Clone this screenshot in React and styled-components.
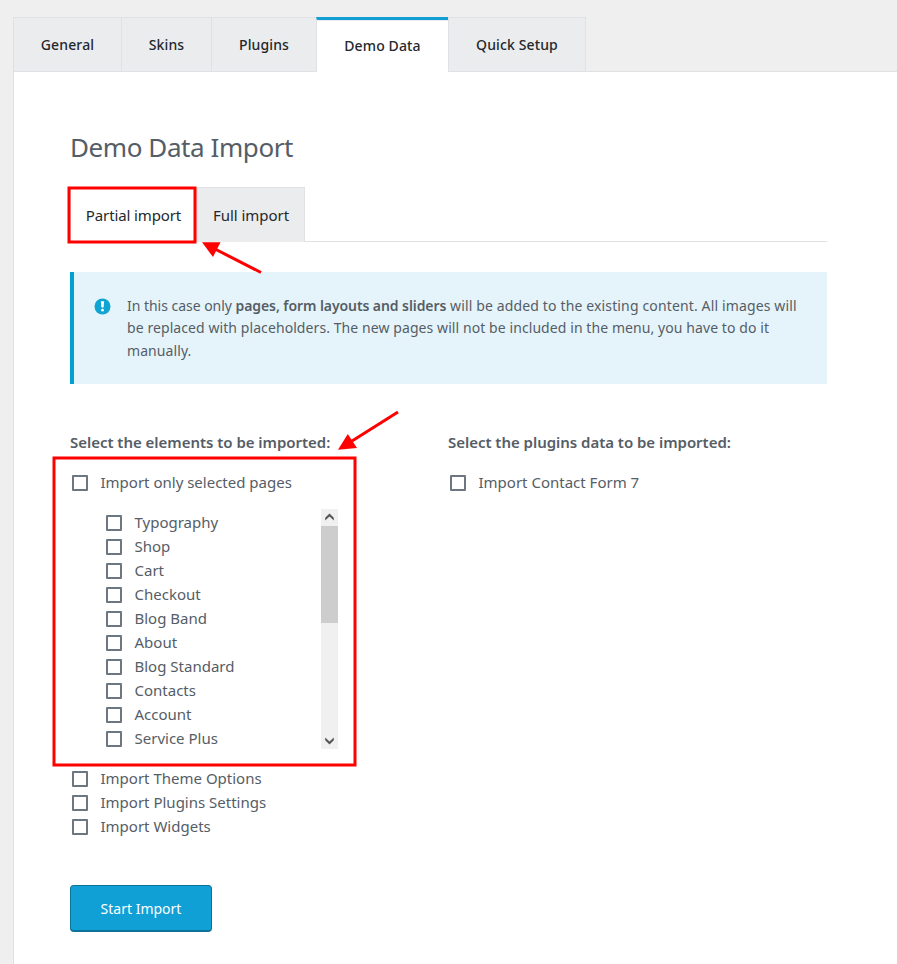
import React from "react";
import styled, { createGlobalStyle, css } from "styled-components";

const line = "#dfe1e5";
const accent = "#139fd3";

const GlobalStyle = createGlobalStyle`
  * { box-sizing: border-box; }
  body {
    margin: 0;
    background: #efefef;
    color: #555d66;
    font-family: "Noto Sans", "Open Sans", sans-serif;
    font-size: 15px;
  }
`;

const Page = styled.div`
  position: relative;
  height: 964px;
  padding: 17px 0 0 13px;
  overflow: hidden;
  display: flex;
  flex-direction: column;
`;

const TabBar = styled.nav`
  display: flex;
  height: 55px;
  flex: none;
  margin-bottom: -1px;
  z-index: 1;
`;

const Tab = styled.button`
  width: ${(p) => p.$width}px;
  height: 55px;
  padding: 0;
  border: 1px solid ${line};
  border-right-width: ${(p) => (p.$last ? 1 : 0)}px;
  background: #ebecee;
  color: #23282d;
  font: 500 14px/53px "Noto Sans", sans-serif;
  letter-spacing: 0.13px;
  text-align: center;
  ${(p) =>
    p.$active &&
    css`
      border-top: 3px solid ${accent};
      border-bottom: 0;
      background: #fff;
      line-height: 52px;
      box-shadow: inset 0 1px 0 #e8eaed;
    `}
`;

const Panel = styled.main`
  flex: 1;
  padding: 57px 70px 0 56px;
  border: 1px solid ${line};
  border-width: 1px 0 0 1px;
  background: #fff;
`;

const Title = styled.h1`
  margin: 0 0 22px;
  font-size: 26px;
  font-weight: 400;
  line-height: 36px;
  letter-spacing: -0.42px;
`;

const SubTabs = styled.div`
  display: flex;
  height: 55px;
  border-bottom: 1px solid ${line};
`;

const SubTab = styled.button`
  width: ${(p) => p.$width}px;
  height: 55px;
  padding: 0;
  border: 1px solid ${line};
  border-bottom: 0;
  background: ${(p) => (p.$active ? "#fff" : "#ebecee")};
  color: #23282d;
  font: 400 15px/55px "Noto Sans", sans-serif;
  letter-spacing: ${(p) => (p.$active ? -0.12 : -0.03)}px;
  text-align: center;
`;

const Notice = styled.div`
  display: flex;
  height: 112px;
  margin-top: 30px;
  padding: 22px 0 0 20px;
  border-left: 4px solid #00a0d2;
  background: #e5f4fa;
`;

const NoticeIcon = styled.svg`
  flex: none;
  width: 17px;
  height: 17px;
  margin: 4px 16px 0 0;
`;

const NoticeText = styled.p`
  margin: 0;
  padding-top: 1px;
  font-size: 14px;
  line-height: 22.4px;
  letter-spacing: 0.08px;
  white-space: nowrap;

  strong { font-weight: 600; letter-spacing: -0.08px; }
`;

const Tight = styled.span`
  letter-spacing: -0.03px;
`;

const Wide = styled.span`
  letter-spacing: 0.14px;
`;

const Columns = styled.div`
  display: grid;
  grid-template-columns: 378px 1fr;
  margin-top: 46px;
`;

const GroupTitle = styled.h2`
  margin: 0 0 15px;
  font-size: 15px;
  font-weight: 600;
  line-height: 24px;
  letter-spacing: -0.03px;
`;

const Option = styled.label`
  display: flex;
  height: 24px;
  padding-left: 2px;
  line-height: 26px;
`;

const Check = styled.input`
  appearance: none;
  flex: none;
  width: 16px;
  height: 16px;
  margin: 6px 12.5px 0 0;
  border: 2px solid #6c7781;
  border-radius: 1px;
  background: #fff;
`;

const PageList = styled.div`
  display: flex;
  justify-content: space-between;
  width: 234px;
  height: 240px;
  margin: 16px 0 16px 34px;
`;

const ScrollBar = styled.div`
  display: flex;
  flex-direction: column;
  justify-content: space-between;
  width: 17px;
  background: #f0f0f0;
`;

const Thumb = styled.div`
  height: 97px;
  margin-bottom: auto;
  background: #cdcdcd;
`;

const Chevron = styled.svg`
  display: block;
  width: 17px;
  height: 17px;
  fill: #555;
`;

const StartButton = styled.button`
  width: 142px;
  height: 47px;
  margin-top: 48px;
  padding: 0;
  border: 1px solid #0d7299;
  border-bottom-width: 2px;
  border-radius: 4px;
  background: #11a0d5;
  color: #fff;
  font: 400 14px/46px "Noto Sans", sans-serif;
`;

const Annotations = styled.svg`
  position: absolute;
  inset: 0;
  width: 897px;
  height: 964px;
  z-index: 2;
  pointer-events: none;
  fill: none;
  stroke: #f00;
  stroke-width: 3;

  polygon { fill: #f00; stroke: none; }
`;

const tabs = [
  { label: "General", width: 108 },
  { label: "Skins", width: 90 },
  { label: "Plugins", width: 105 },
  { label: "Demo Data", width: 132, active: true },
  { label: "Quick Setup", width: 138 },
];

const pages = [
  "Typography",
  "Shop",
  "Cart",
  "Checkout",
  "Blog Band",
  "About",
  "Blog Standard",
  "Contacts",
  "Account",
  "Service Plus",
];

const settings = ["Import Theme Options", "Import Plugins Settings", "Import Widgets"];

function CheckOption({ children }) {
  return (
    <Option>
      <Check type="checkbox" />
      {children}
    </Option>
  );
}

export default function App() {
  return (
    <Page>
      <GlobalStyle />
      <TabBar>
        {tabs.map((tab, i) => (
          <Tab key={tab.label} $width={tab.width} $active={tab.active} $last={i === tabs.length - 1}>
            {tab.label}
          </Tab>
        ))}
      </TabBar>
      <Panel>
        <Title>Demo Data Import</Title>
        <SubTabs>
          <SubTab $width={127} $active>Partial import</SubTab>
          <SubTab $width={108}>Full import</SubTab>
        </SubTabs>
        <Notice>
          <NoticeIcon viewBox="0 0 17 17">
            <circle cx="8.5" cy="8.5" r="8" fill="#0ea4d4" />
            <path d="M6.9 3.2h3.2l-.5 6.3H7.4z" fill="#fff" />
            <circle cx="8.5" cy="12.2" r="1.4" fill="#fff" />
          </NoticeIcon>
          <NoticeText>
            <Tight>In this case only </Tight>
            <strong>pages, form layouts and sliders</strong>
            <Wide> will be added to the existing content. All images will</Wide>
            <br />
            be replaced with placeholders. The new pages will not be included in the menu, you have to do it
            <br />
            manually.
          </NoticeText>
        </Notice>
        <Columns>
          <section>
            <GroupTitle>Select the elements to be imported:</GroupTitle>
            <CheckOption>Import only selected pages</CheckOption>
            <PageList>
              <div>
                {pages.map((page) => (
                  <CheckOption key={page}>{page}</CheckOption>
                ))}
              </div>
              <ScrollBar>
                <Chevron viewBox="0 0 17 17">
                  <path d="M4.2 8.8 8.5 4.5l4.3 4.3v2.8L8.5 7.6l-4.3 4z" />
                </Chevron>
                <Thumb />
                <Chevron viewBox="0 0 17 17">
                  <path d="M4.2 5.4l4.3 4 4.3-4v2.8l-4.3 4.3-4.3-4.3z" />
                </Chevron>
              </ScrollBar>
            </PageList>
            {settings.map((item) => (
              <CheckOption key={item}>{item}</CheckOption>
            ))}
          </section>
          <section>
            <GroupTitle>Select the plugins data to be imported:</GroupTitle>
            <CheckOption>Import Contact Form 7</CheckOption>
          </section>
        </Columns>
        <StartButton>Start Import</StartButton>
      </Panel>
      <Annotations viewBox="0 0 897 964">
        <rect x="69" y="188" width="126" height="54" strokeWidth="3" />
        <rect x="54" y="458" width="301" height="307" />
        <path d="M214 248.5 261 272.5M352 441 398 412" />
        <polygon points="202,242.3 220.5,242.3 213,257" />
        <polygon points="338,449.8 347.8,434 357,448" />
      </Annotations>
    </Page>
  );
}
